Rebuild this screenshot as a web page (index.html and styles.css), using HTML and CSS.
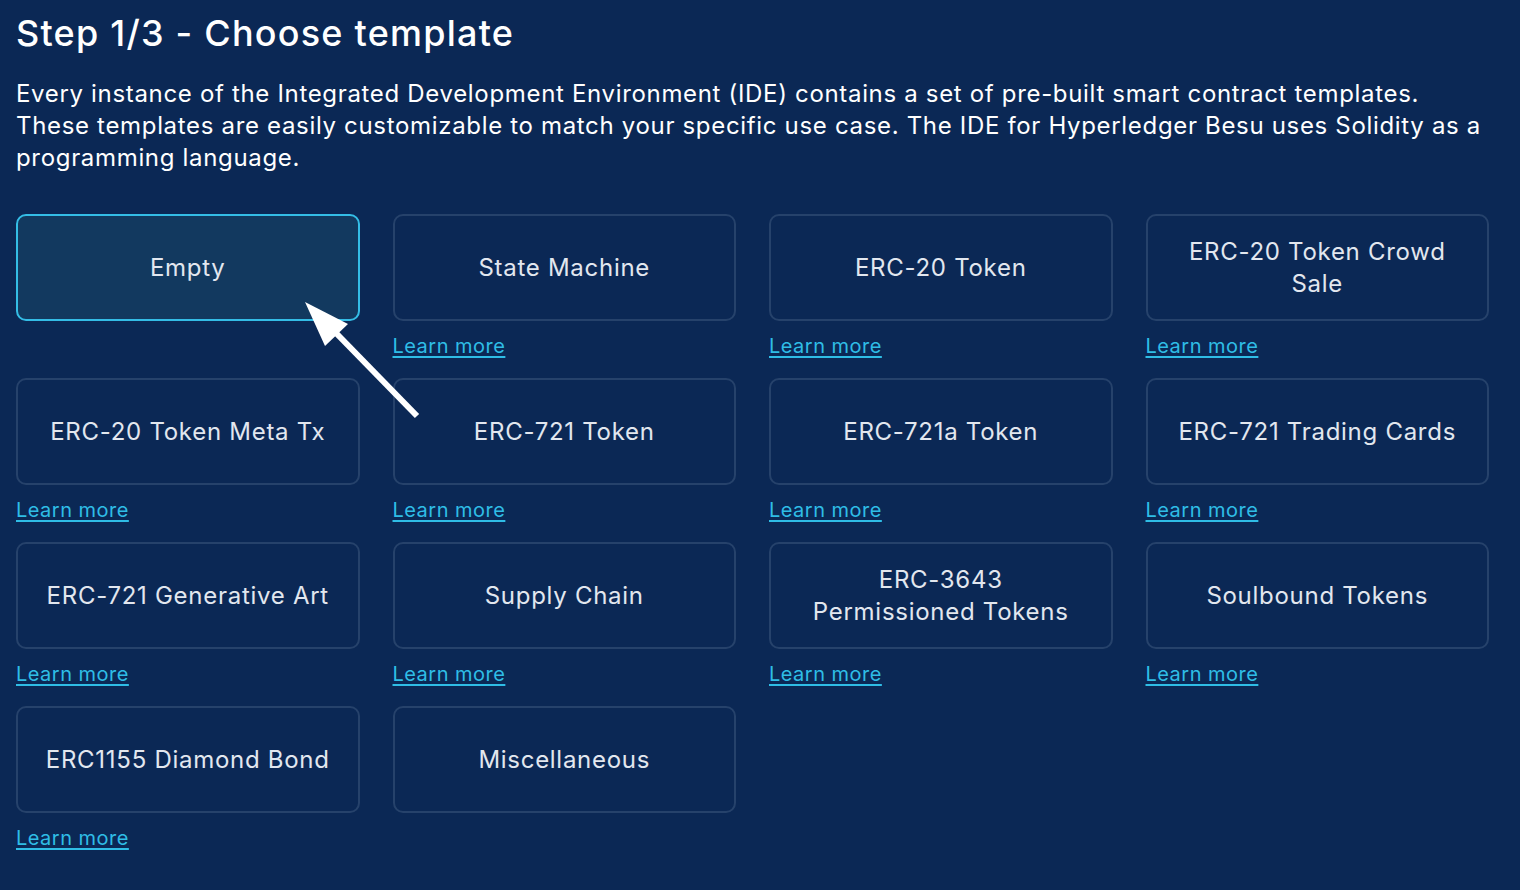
FILE: index.html
```html
<!DOCTYPE html>
<html lang="en">
<head>
<meta charset="utf-8">
<title>Choose template</title>
<link rel="stylesheet" href="styles.css">
</head>
<body>
<main class="page">
  <h1 class="title">Step 1/3 - Choose template</h1>
  <p class="intro">Every instance of the Integrated Development Environment (IDE) contains a set of pre-built smart contract templates.<br>These templates are easily customizable to match your specific use case. The IDE for Hyperledger Besu uses Solidity as a<br>programming language.</p>
  <div class="grid">
    <div class="cell">
      <button class="card selected">Empty</button>
      <svg class="pointer" width="130" height="130" viewBox="0 0 130 130">
        <line x1="115" y1="117" x2="34" y2="34" stroke="#fff" stroke-width="6"/>
        <polygon points="3,3 46,25 23,47" fill="#fff"/>
      </svg>
    </div>
    <div class="cell"><button class="card">State Machine</button><a class="learn" href="#">Learn more</a></div>
    <div class="cell"><button class="card">ERC-20 Token</button><a class="learn" href="#">Learn more</a></div>
    <div class="cell"><button class="card">ERC-20 Token Crowd<br>Sale</button><a class="learn" href="#">Learn more</a></div>

    <div class="cell"><button class="card">ERC-20 Token Meta Tx</button><a class="learn" href="#">Learn more</a></div>
    <div class="cell"><button class="card">ERC-721 Token</button><a class="learn" href="#">Learn more</a></div>
    <div class="cell"><button class="card">ERC-721a Token</button><a class="learn" href="#">Learn more</a></div>
    <div class="cell"><button class="card">ERC-721 Trading Cards</button><a class="learn" href="#">Learn more</a></div>

    <div class="cell"><button class="card">ERC-721 Generative Art</button><a class="learn" href="#">Learn more</a></div>
    <div class="cell"><button class="card">Supply Chain</button><a class="learn" href="#">Learn more</a></div>
    <div class="cell"><button class="card">ERC-3643<br>Permissioned Tokens</button><a class="learn" href="#">Learn more</a></div>
    <div class="cell"><button class="card">Soulbound Tokens</button><a class="learn" href="#">Learn more</a></div>

    <div class="cell"><button class="card">ERC1155 Diamond Bond</button><a class="learn" href="#">Learn more</a></div>
    <div class="cell"><button class="card">Miscellaneous</button></div>
  </div>
</main>
</body>
</html>
```
FILE: styles.css
```css
html, body {
  margin: 0;
  padding: 0;
  background: #0b2855;
  height: 100%;
}
body {
  font-family: Inter, "Noto Sans", sans-serif;
  color: #ffffff;
  letter-spacing: 0.03em;
}
.page {
  padding: 10px 31px 0 16px;
}
.title {
  margin: 0;
  font-size: 36px;
  line-height: 46px;
  font-weight: 500;
  letter-spacing: 0.034em;
  color: #ffffff;
}
.intro {
  margin: 22px 0 0 0;
  font-size: 24px;
  line-height: 32px;
  font-weight: 400;
  letter-spacing: 0.028em;
  white-space: nowrap;
  color: #ffffff;
}
.grid {
  margin-top: 40px;
  display: grid;
  grid-template-columns: repeat(4, 1fr);
  column-gap: 33px;
  row-gap: 20px;
}
.cell {
  position: relative;
  display: flex;
  flex-direction: column;
  align-items: flex-start;
}
.card {
  width: 100%;
  height: 107px;
  box-sizing: border-box;
  border: 2px solid #26426b;
  border-radius: 10px;
  background: #0b2855;
  color: #e2e7ef;
  font-family: inherit;
  font-size: 24px;
  line-height: 32px;
  letter-spacing: 0.03em;
  padding: 0 20px;
  text-align: center;
  cursor: pointer;
}
.card.selected {
  background: #12395f;
  border-color: #34bde6;
}
.learn {
  margin-top: 13px;
  font-size: 20px;
  line-height: 24px;
  color: #2fbde6;
  text-decoration: underline;
  text-underline-offset: 3px;
}
.pointer {
  position: absolute;
  left: 286px;
  top: 85px;
  z-index: 2;
}
```
